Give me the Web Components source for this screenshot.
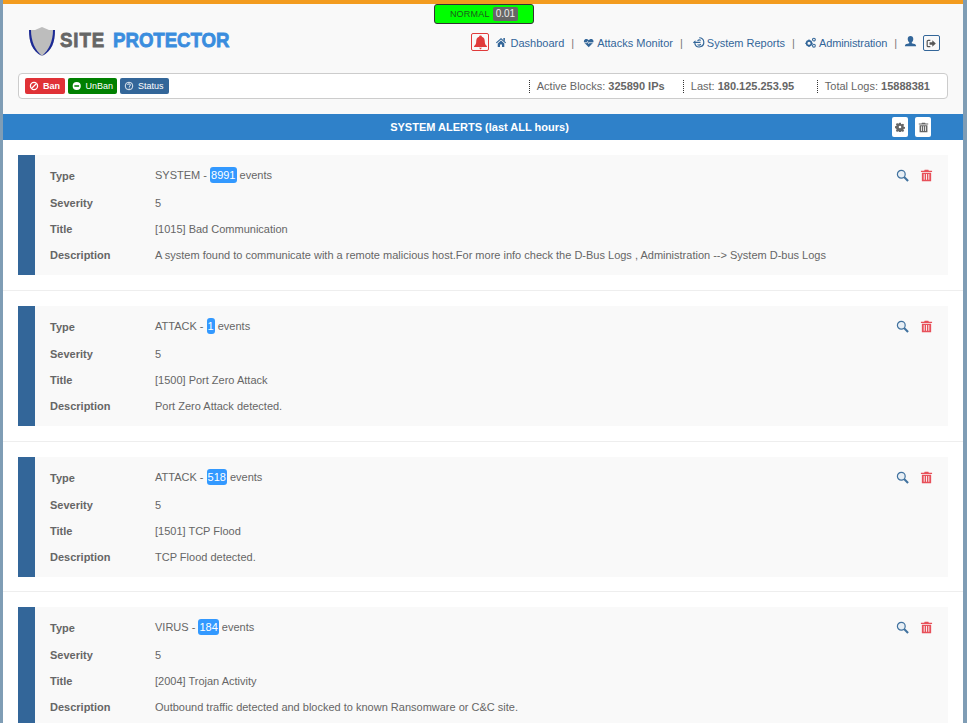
<!DOCTYPE html>
<html>
<head>
<meta charset="utf-8">
<title>Site Protector</title>
<style>
    html, body { margin: 0; padding: 0; height: 723px; overflow: hidden; background: #fff; }
    body { font-family: "Liberation Sans", Arial, sans-serif; font-size: 11px; color: #666; }
</style>
</head>
<body>
<site-shell>
    <site-header></site-header>
    <site-toolbar blocks="325890 IPs" last="180.125.253.95" logs="15888381"></site-toolbar>
    <alert-bar>SYSTEM ALERTS (last ALL hours)</alert-bar>
    <alert-card kind="SYSTEM" count="8991" severity="5" name="[1015] Bad Communication">A system found to communicate with a remote malicious host.For more info check the D-Bus Logs , Administration --&gt; System D-bus Logs</alert-card>
    <alert-card kind="ATTACK" count="1" severity="5" name="[1500] Port Zero Attack">Port Zero Attack detected.</alert-card>
    <alert-card kind="ATTACK" count="518" severity="5" name="[1501] TCP Flood">TCP Flood detected.</alert-card>
    <alert-card kind="VIRUS" count="184" severity="5" name="[2004] Trojan Activity">Outbound traffic detected and blocked to known Ransomware or C&amp;C site.</alert-card>
</site-shell>

<script>
// shared icons, all on a 14 box
const icons = {
    bell: '<path d="M7 .5c.8 0 1.200.5 1.300 1.100C10.400 2.200 11 4 11 6c0 2 .7 3.300 2 4.300v.9H1v-.9c1.300-1 2-2.300 2-4.300 0-2 .6-3.800 2.700-4.400C5.800 1 6.200.5 7 .5zM5.600 12h2.800L7 13.500z"/>',
    home: '<g transform="translate(.6 .8) scale(.84)"><path d="M10 1.500h2v4.200l-2-1.800zM7 1.500 13.500 7.500 12.500 8.500 7 3.500 1.500 8.500.5 7.500zM2.800 8.700 7 4.900l4.200 3.800V13H8.300V9.800H5.700V13H2.800z"/></g>',
    heart: '<g transform="translate(1.500 1.500) scale(.82)"><path d="M7 13 1.500 7.500C-.2 5.600.8 2 3.800 2 5.300 2 6.300 2.800 7 3.800 7.700 2.800 8.700 2 10.200 2c3 0 4 3.600 2.300 5.500z"/><path d="M.5 7h4l1-1.700 1.500 3 1.200-2 .6.700h5" fill="none" stroke="#f9f9f9" stroke-width="1"/></g>',
    report: '<g transform="translate(1 .5) scale(.9)"><path d="M7.500 1.500a5.500 5.500 0 1 1-5.200 7.300" fill="none" stroke="currentColor" stroke-width="1.400"/><path d="M0 7.300 3 4.500v1.800h6v1.400H3v1.500z"/><path d="M9.500 4.700a3 3 0 0 0-4 .6M5.500 9.700a3 3 0 0 0 4-.6" fill="none" stroke="currentColor" stroke-width="1.200"/></g>',
    gears: '<g transform="translate(1 .8) scale(.88)"><circle cx="5" cy="8" r="2.900" fill="none" stroke="currentColor" stroke-width="2"/><path d="M4.200 3.500h1.600v1.500H4.200zM4.200 11h1.600v1.500H4.200zM.5 7.200H2v1.600H.5zM8 7.200h1.500v1.600H8z"/><circle cx="11" cy="3.500" r="1.700" fill="none" stroke="currentColor" stroke-width="1.300"/><circle cx="11" cy="11" r="1.700" fill="none" stroke="currentColor" stroke-width="1.300"/></g>',
    user: '<path d="M7 1c1.900 0 3 1.400 3 3.300 0 1.500-.7 2.900-1.600 3.500v1c2.400.6 4.600 1 4.600 2.700v.5H1v-.5c0-1.700 2.200-2.100 4.600-2.700v-1C4.700 7.200 4 5.800 4 4.300 4 2.400 5.100 1 7 1z"/>',
    logout: '<path d="M5.500 3H2.700C2 3 1.500 3.500 1.500 4.200v5.600c0 .7.500 1.200 1.200 1.200h2.800" fill="none" stroke="currentColor" stroke-width="1.500"/><path d="M4.500 5.500h3.500V3L12.500 7 8 11V8.500H4.500z"/>',
    ban: '<circle cx="7" cy="7" r="5" fill="none" stroke="currentColor" stroke-width="1.800"/><path d="M3.500 10.500l7-7" stroke="currentColor" stroke-width="1.800"/>',
    minus: '<path fill-rule="evenodd" d="M7 1a6 6 0 1 1 0 12A6 6 0 0 1 7 1zM3.500 5.800v2.400h7V5.800z"/>',
    help: '<circle cx="7" cy="7" r="5.300" fill="none" stroke="currentColor" stroke-width="1.200"/><path d="M5 5.600C5.100 4.400 6 3.900 7 3.900c1.200 0 2 .7 2 1.700 0 1.500-1.600 1.400-1.600 2.700" fill="none" stroke="currentColor" stroke-width="1.200"/><path d="M6.600 9.200h1.300v1.300H6.600z"/>',
    cog: '<path fill-rule="evenodd" d="M5.800 1h2.400l.3 1.800 1.100.5 1.500-1 1.700 1.700-1 1.500.5 1.100 1.800.3v2.400l-1.800.3-.5 1.100 1 1.500-1.700 1.700-1.500-1-1.100.5-.3 1.800H5.800l-.3-1.800-1.100-.5-1.500 1-1.700-1.700 1-1.500-.5-1.100L-.1 8.300V5.900l1.800-.3.5-1.100-1-1.500 1.700-1.700 1.500 1 1.100-.5zM7 5.300a1.800 1.800 0 1 0 0 3.600 1.800 1.800 0 0 0 0-3.600z"/>',
    trash: '<path d="M5 .8h4l.5 1H13v1.500H1V1.800h3.500z"/><path fill-rule="evenodd" d="M2 4h10v9.200H2zM4 5.500v6h1v-6zM6.500 5.500v6h1v-6zM9 5.500v6h1v-6z"/>',
    search: '<circle cx="5.700" cy="5.700" r="4.200" fill="#cfe0f0" fill-opacity=".4" stroke="currentColor" stroke-width="1.300"/><path d="M8.700 8.700l4.300 4.300" stroke="currentColor" stroke-width="2.200"/>'
}

function icon(name, size) {
    return `<svg width="${size}" height="${size}" viewBox="0 0 14 14" fill="currentColor" aria-hidden="true">${icons[name]}</svg>`
}

class SiteShell extends HTMLElement {
    constructor() {
        super();
        this.attachShadow({ mode: 'open' })
        this.shadowRoot.innerHTML = `
            <style>
                :host {
                    display: block;
                    box-sizing: border-box;
                    height: 723px;
                    overflow: hidden;
                    background: #fff;
                    border-left: 3px solid #7f9db5;
                    border-right: 4px solid #7f9db5;
                }
            </style>
            <slot></slot>
        `
    }
}

class SiteHeader extends HTMLElement {
    constructor() {
        super();
        this.attachShadow({ mode: 'open' })
        this.shadowRoot.innerHTML = `
            <style>
                :host {
                    display: block;
                    position: relative;
                    box-sizing: border-box;
                    height: 73px;
                    background: #f9f9f9;
                    border-top: 4px solid #f39c1f;
                }
                .load {
                    position: absolute;
                    left: 431px;
                    top: 0;
                    box-sizing: border-box;
                    width: 100px;
                    height: 20px;
                    display: flex;
                    align-items: center;
                    justify-content: center;
                    gap: 3px;
                    background: #00ff00;
                    border: 1px solid #333;
                    border-radius: 3px;
                    font-size: 9px;
                    letter-spacing: .2px;
                    color: #1c5c1c;
                }
                .load b {
                    font-weight: normal;
                    font-size: 10px;
                    letter-spacing: 0;
                    color: #eee;
                    background: #666;
                    border-radius: 2px;
                    padding: 0 3px;
                    line-height: 14px;
                }
                .logo {
                    position: absolute;
                    left: 25px;
                    top: 21px;
                    display: flex;
                    align-items: center;
                    gap: 4px;
                    height: 32px;
                    font: bold 21px "Liberation Sans", Arial, sans-serif;
                    -webkit-text-stroke: .8px currentColor;
                    color: #666;
                    white-space: nowrap;
                }
                .logo .t {
                    display: block;
                    margin-top: -2px;
                    letter-spacing: 1px;
                    transform: scaleX(.89);
                    transform-origin: left center;
                }
                .logo em { font-style: normal; color: #3a8dde; margin-left: 9px; letter-spacing: -.1px; }
                nav {
                    position: absolute;
                    right: 23px;
                    top: 29px;
                    display: flex;
                    align-items: center;
                    height: 20px;
                    color: #336699;
                }
                .alarm {
                    display: flex;
                    align-items: center;
                    justify-content: center;
                    box-sizing: border-box;
                    width: 18px;
                    height: 18px;
                    border: 1px solid #e03a3a;
                    border-radius: 2px;
                    color: #e03a3a;
                    margin-right: 6px;
                    align-self: flex-start;
                }
                .out {
                    display: flex;
                    align-items: center;
                    justify-content: center;
                    box-sizing: border-box;
                    width: 17px;
                    height: 16px;
                    border: 1px solid #336699;
                    border-radius: 2px;
                    color: #555;
                    margin-left: 6px;
                }
                .me { display: flex; margin: -4px 0 0 -1px; }
                .tight { letter-spacing: -.1px; }
            </style>
            <div class="logo">
                <svg width="28" height="31" viewBox="0 0 28 31">
                    <path d="M14 1 L21 4 L27 4 C27 16 24 25 14 30 C4 25 1 16 1 4 L7 4 Z" fill="#bdbdbd"/>
                    <path d="M1 4 L3 4 C3 15 7 24 14 30 C4 25 1 16 1 4 Z M27 4 L25 4 C25 15 21 24 14 30 C24 25 27 16 27 4 Z" fill="#1c2a96"/>
                </svg>
                <span class="t">SITE<em>PROTECTOR</em></span>
            </div>
            <div class="load">NORMAL <b>0.01</b></div>
            <nav>
                <span class="alarm">${icon('bell', 15)}</span>
                <nav-link icon="home">Dashboard</nav-link>
                <nav-link icon="heart">Attacks Monitor</nav-link>
                <nav-link icon="report" gap="1">System Reports</nav-link>
                <nav-link class="tight" icon="gears" gap="1">Administration</nav-link>
                <span class="me">${icon('user', 13)}</span>
                <span class="out">${icon('logout', 11)}</span>
            </nav>
        `
    }
}

class NavLink extends HTMLElement {
    constructor() {
        super();
        this.attachShadow({ mode: 'open' })
        this.shadowRoot.innerHTML = `
            <style>
                :host { display: inline-flex; align-items: center; color: #336699; font-size: 11px; white-space: nowrap; }
                svg { margin-right: 2px; margin-top: -2px; }
                i { font-style: normal; color: #777; margin: 0 8px 0 7px; }
            </style>
            ${icon(this.getAttribute('icon'), 13)}<slot></slot><i>|</i>
        `
        if (this.getAttribute('gap')) this.style.marginLeft = this.getAttribute('gap') + 'px'
    }
}

class SiteToolbar extends HTMLElement {
    constructor() {
        super();
        this.attachShadow({ mode: 'open' })
        this.shadowRoot.innerHTML = `
            <style>
                :host { display: block; background: #f9f9f9; padding: 0 15px 15px 15px; }
                .bar {
                    display: flex;
                    align-items: center;
                    box-sizing: border-box;
                    height: 26px;
                    padding: 0 6px;
                    background: #fff;
                    border: 1px solid #ccc;
                    border-radius: 4px;
                }
                .btn {
                    display: inline-flex;
                    align-items: center;
                    height: 16px;
                    padding: 0 4px;
                    margin-right: 3px;
                    border-radius: 2px;
                    color: #fff;
                    font-size: 9px;
                    gap: 4px;
                }
                .ban { background: #e03237; font-weight: bold; width: 32px; }
                .unban { background: #008000; width: 41px; }
                .status { background: #336699; width: 41px; }
                .stats { margin-left: auto; display: flex; font-size: 11px; color: #666; }
                .stats span { border-left: 1px dotted #333; padding-left: 7px; line-height: 13px; }
                .stats span:nth-child(1) { width: 146px; }
                .stats span:nth-child(2) { width: 126px; }
                .stats span:nth-child(3) { margin-right: 11px; }
            </style>
            <div class="bar">
                <span class="btn ban">${icon('ban', 10)}Ban</span>
                <span class="btn unban">${icon('minus', 10)}UnBan</span>
                <span class="btn status">${icon('help', 10)}Status</span>
                <div class="stats">
                    <span>Active Blocks: <b>${this.getAttribute('blocks')}</b></span>
                    <span>Last: <b>${this.getAttribute('last')}</b></span>
                    <span>Total Logs: <b>${this.getAttribute('logs')}</b></span>
                </div>
            </div>
        `
    }
}

class AlertBar extends HTMLElement {
    constructor() {
        super();
        this.attachShadow({ mode: 'open' })
        this.shadowRoot.innerHTML = `
            <style>
                :host {
                    display: flex;
                    position: relative;
                    align-items: center;
                    justify-content: center;
                    height: 26px;
                    background: #2f81c9;
                    color: #fff;
                    font-weight: bold;
                    font-size: 11px;
                    padding-right: 7px;
                }
                .tools { position: absolute; right: 32px; top: 3px; display: flex; gap: 7px; }
                .tools span {
                    display: flex;
                    align-items: center;
                    justify-content: center;
                    width: 16px;
                    height: 20px;
                    background: #fff;
                    border-radius: 2px;
                    color: #666;
                }
            </style>
            <slot></slot>
            <div class="tools"><span>${icon('cog', 10)}</span><span>${icon('trash', 11)}</span></div>
        `
    }
}

class AlertCard extends HTMLElement {
    constructor() {
        super();
        this.attachShadow({ mode: 'open' })
        this.shadowRoot.innerHTML = `
            <style>
                :host { display: block; padding: 15px 15px 14.8px 15px; border-bottom: 1px solid #eee; }
                :host(:last-child) { border-bottom: 0; }
                .card {
                    position: relative;
                    display: grid;
                    grid-template-columns: 105px 1fr;
                    grid-template-rows: 27px 26px 26px 26px;
                    align-items: center;
                    height: 120px;
                    box-sizing: border-box;
                    padding: 8px 0 0 15px;
                    background: #f9f9f9;
                    border-left: 17px solid #336699;
                    font-size: 11px;
                    color: #666;
                }
                .label { font-weight: bold; }
                .head { margin-bottom: 1px; }
                .first { padding-bottom: 3px; }
                .count {
                    display: inline-block;
                    background: #3399ff;
                    color: #fff;
                    border-radius: 3px;
                    padding: 2px 1px;
                    line-height: 12px;
                }
                .actions { position: absolute; right: 15px; top: 14px; display: flex; gap: 11px; }
                .find { color: #41729f; display: flex; }
                .del { color: #e8505a; display: flex; }
            </style>
            <div class="card">
                <div class="label head">Type</div>
                <div class="first">${this.getAttribute('kind')} - <span class="count">${this.getAttribute('count')}</span> events</div>
                <div class="label">Severity</div>
                <div>${this.getAttribute('severity')}</div>
                <div class="label">Title</div>
                <div>${this.getAttribute('name')}</div>
                <div class="label">Description</div>
                <div><slot></slot></div>
                <div class="actions">
                    <span class="find">${icon('search', 13)}</span>
                    <span class="del">${icon('trash', 13)}</span>
                </div>
            </div>
        `
    }
}

window.customElements.define('site-shell', SiteShell)
window.customElements.define('nav-link', NavLink)
window.customElements.define('site-header', SiteHeader)
window.customElements.define('site-toolbar', SiteToolbar)
window.customElements.define('alert-bar', AlertBar)
window.customElements.define('alert-card', AlertCard)
</script>
</body>
</html>
